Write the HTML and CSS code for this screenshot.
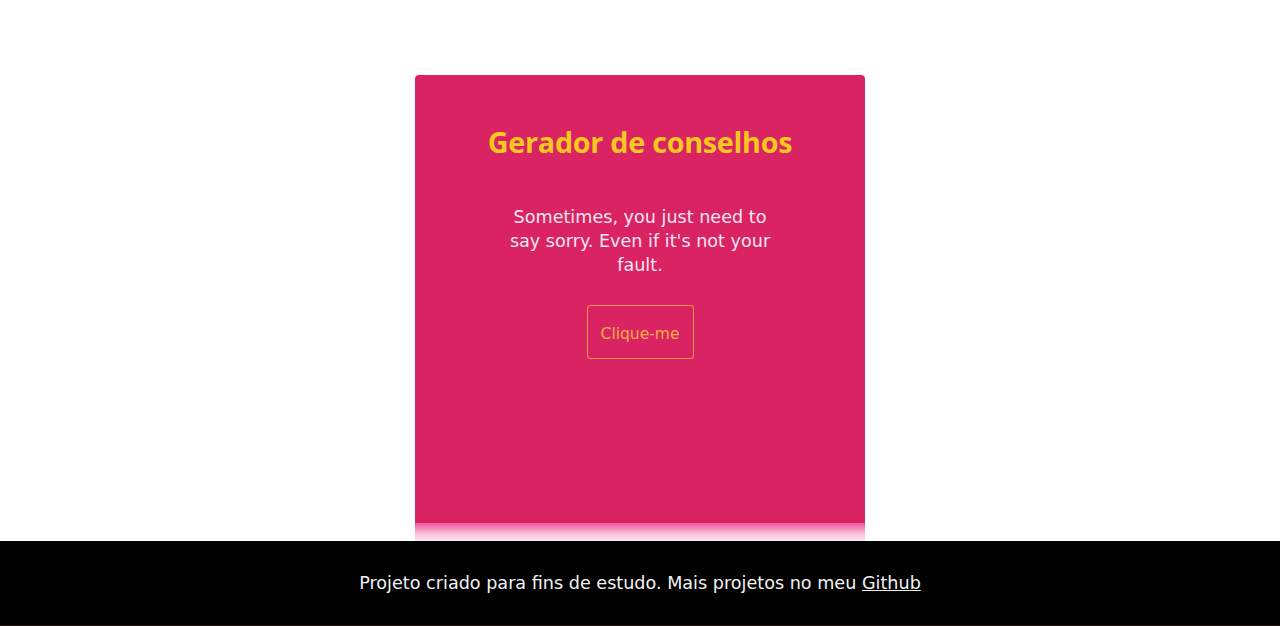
FILE: index.html
```html
<!DOCTYPE html>
<html lang="pt-BR">
<head>
<meta charset="utf-8">
<title>Gerador de conselhos</title>
<link rel="stylesheet" href="styles.css">
</head>
<body>
<main class="page">
  <section class="card">
    <h1 class="title">Gerador de conselhos</h1>
    <p class="advice">Sometimes, you just need to say sorry. Even if it's not your fault.</p>
    <button class="btn" type="button">Clique-me</button>
  </section>
</main>
<footer class="footer">
  <p class="footer-text">Projeto criado para fins de estudo. Mais projetos no meu <a class="footer-link" href="#">Github</a></p>
</footer>
</body>
</html>
```

FILE: styles.css
```css
html, body {
  margin: 0;
  padding: 0;
  background: #ffffff;
  height: 100%;
  overflow: hidden;
}
body {
  font-family: "DejaVu Sans", "Noto Sans", sans-serif;
}
.page {
  display: flex;
  justify-content: center;
  padding-top: 75px;
}
.card {
  width: 450px;
  height: 466px;
  box-sizing: border-box;
  background: #d92363;
  border-radius: 4px 4px 0 0;
  display: flex;
  flex-direction: column;
  align-items: center;
  padding-top: 50px;
  background-image: linear-gradient(to bottom, #d92363 0, #d92363 448px, #f05aa0 448px, #f37ab4 452px, #f7a6cd 456px, #fbc9e2 460px, #fde3ef 466px);
}
.title {
  margin: 0;
  font-family: "Open Sans", sans-serif;
  font-weight: 700;
  font-size: 28.8px;
  line-height: 34px;
  color: #f8c81e;
  letter-spacing: -0.3px;
}
.advice {
  margin: 46px 0 0;
  width: 264px;
  text-align: center;
  font-family: "DejaVu Sans", sans-serif;
  font-size: 17.6px;
  line-height: 24px;
  color: #f8e6ef;
}
.btn {
  margin-top: 28px;
  width: 107px;
  height: 54px;
  background: transparent;
  border: 1px solid #f59a3c;
  border-radius: 3px;
  color: #f8ae45;
  font-family: "DejaVu Sans", sans-serif;
  font-size: 15.5px;
  padding: 3px 0 0;
}
.footer {
  position: fixed;
  left: 0;
  right: 0;
  bottom: 0;
  height: 85px;
  background: #000000;
  display: flex;
  align-items: center;
  justify-content: center;
  border-bottom: 1px solid #2a1a12;
  box-sizing: border-box;
}
.footer-text {
  margin: 0;
  font-family: "DejaVu Sans", sans-serif;
  font-size: 17.6px;
  color: #f2f2f2;
}
.footer-link {
  color: #f2f2f2;
  text-decoration: underline;
}
```
